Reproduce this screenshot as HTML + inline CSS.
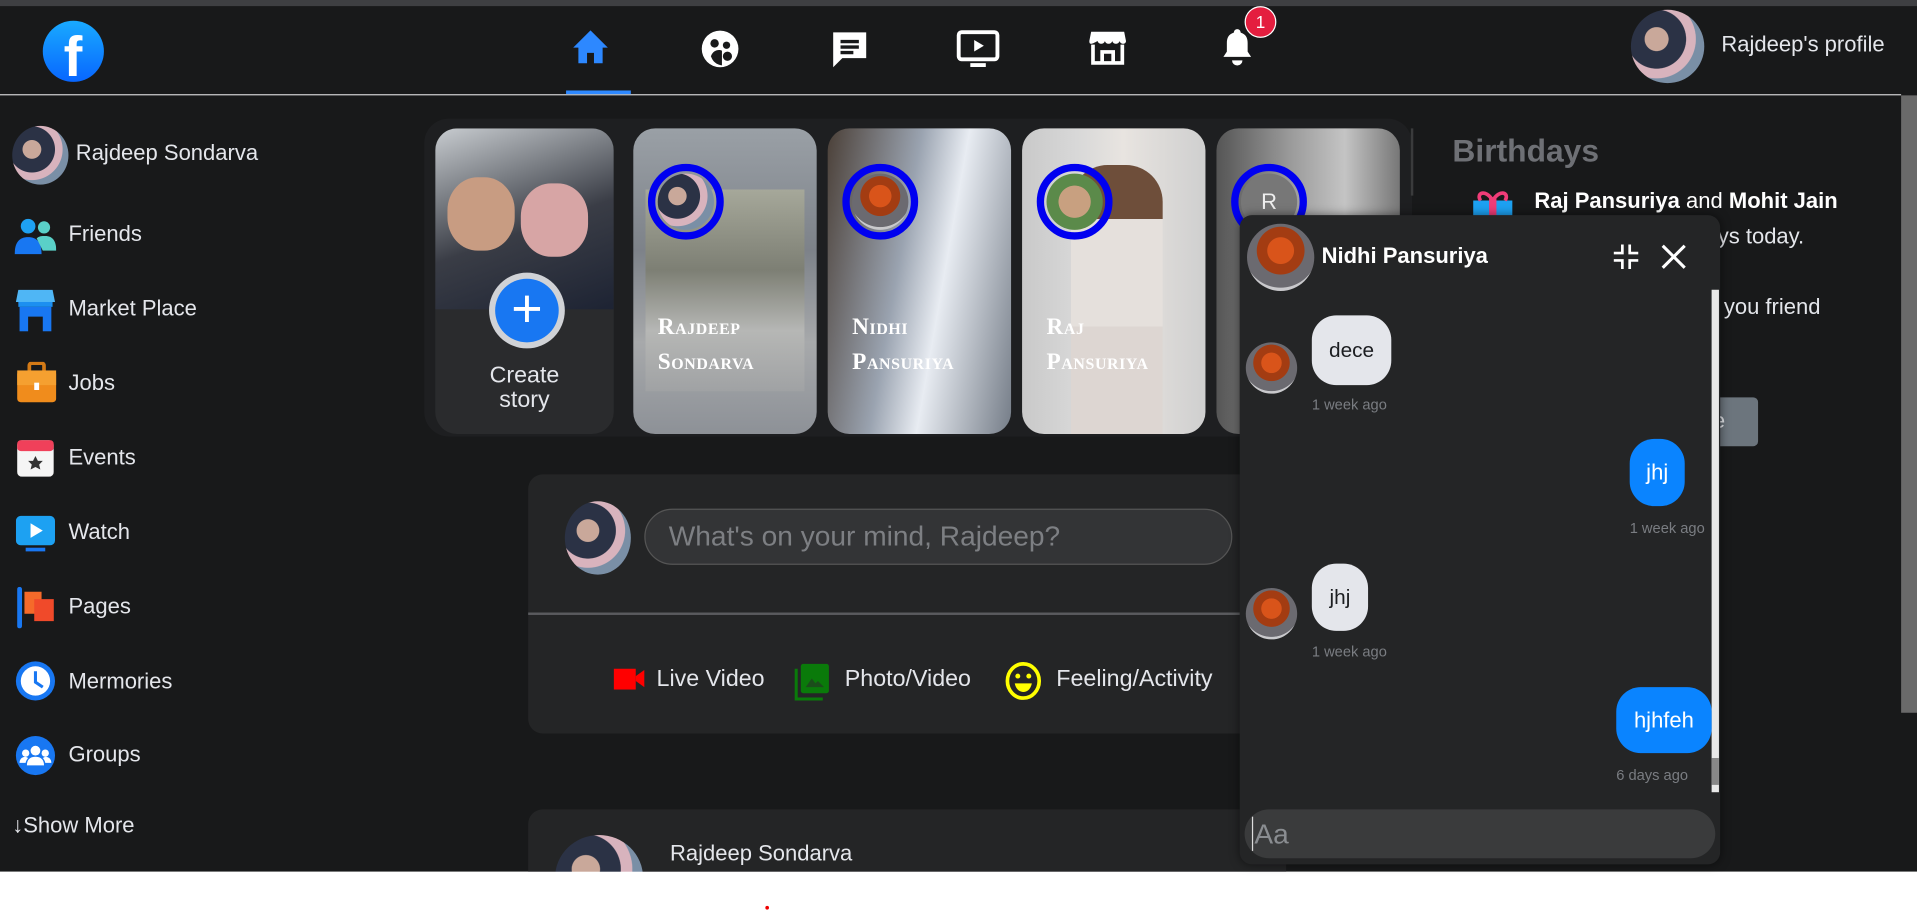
<!DOCTYPE html>
<html><head><meta charset="utf-8"><style>
html,body{margin:0;padding:0;width:1917px;height:912px;overflow:hidden;background:#fff;font-family:"Liberation Sans",sans-serif}
#w{position:absolute;left:0;top:0;width:1568px;height:746px;transform:scale(1.22258);transform-origin:0 0;background:#fff;overflow:hidden}
.a{position:absolute}
.t{position:absolute;color:#e4e6eb;white-space:nowrap}
.av{position:absolute;border-radius:50%;background:radial-gradient(circle at 35% 40%,#c9a89a 0 18%,#2b3245 19% 45%,#d8b3bd 46% 60%,#7a8fa6 61%);}
.tree{position:absolute;border-radius:50%;background:radial-gradient(circle at 50% 40%,#d9541a 0 25%,#a33c12 26% 45%,#6b6a70 46% 70%,#c9c9cc 71%);}
.story{position:absolute;top:105px;width:150px;height:250px;border-radius:18px;overflow:hidden}
.ring{position:absolute;top:134px;width:50px;height:50px;border:6px solid #0000f0;border-radius:50%}
.sn{position:absolute;left:20px;color:#fff;font-weight:bold;font-variant:small-caps;font-size:19px;font-family:"Liberation Serif",serif;letter-spacing:.5px}
.s{font-size:18px}
</style></head><body><div id="w">
<div class="a" style="left:0;top:0;width:1568px;height:713px;background:#18191a"></div>
<div class="a" style="left:0;top:0;width:1568px;height:5px;background:#3e3f42"></div>
<div class="a" style="left:0;top:77px;width:1555px;height:1px;background:#d0d0d0"></div>
<div class="a" style="left:1555px;top:78px;width:13px;height:505px;background:#6a6a6a"></div>
<div class="a" style="left:35px;top:17px;width:50px;height:50px;border-radius:50%;background:linear-gradient(#19aaff,#0866ff);overflow:hidden"><div class="a" style="left:17px;top:2px;color:#fff;font-weight:bold;font-size:46px;font-family:'Liberation Sans'">f</div></div>
<svg class="a" style="left:466px;top:22px" width="34" height="34" viewBox="0 0 24 24"><path fill="#2d88ff" d="M12 2 2 12h3v9h5v-6h4v6h5v-9h3z"/></svg>
<div class="a" style="left:463px;top:74px;width:53px;height:3px;background:#2d88ff"></div>
<svg class="a" style="left:571px;top:22px" width="36" height="36" viewBox="0 0 24 24"><circle cx="12" cy="12" r="10" fill="#fff"/><circle cx="9" cy="9" r="2.3" fill="#18191a"/><circle cx="15.5" cy="10" r="2" fill="#18191a"/><path d="M7 16c1-3 4-4 6-3v8c-3-.5-5-2-6-5z" fill="#18191a"/><circle cx="16" cy="16" r="2.5" fill="#18191a"/></svg>
<svg class="a" style="left:677px;top:22px" width="36" height="36" viewBox="0 0 24 24"><path fill="#fff" d="M3 3h18v14H8l-5 5z"/><path stroke="#18191a" stroke-width="1.8" d="M7 8h10M7 11h10M7 14h7"/></svg>
<svg class="a" style="left:781px;top:20px" width="38" height="38" viewBox="0 0 24 24"><rect x="2" y="4" width="20" height="14" rx="1.5" fill="none" stroke="#fff" stroke-width="2"/><path d="M10 8v6l5-3z" fill="#fff"/><path d="M8 21h8" stroke="#fff" stroke-width="2"/></svg>
<svg class="a" style="left:888px;top:20px" width="36" height="36" viewBox="0 0 24 24"><path d="M3 4h18l1 5c0 2-3 2-3.5 0-.5 2-3.5 2-4 0-.5 2-3.5 2-4 0-.5 2-3.5 2-4 0C3 11 2 11 2 9z" fill="#fff"/><path d="M4 11v10h16V11M9 21v-6h6v6" fill="none" stroke="#fff" stroke-width="2"/></svg>
<svg class="a" style="left:995px;top:20px" width="34" height="36" viewBox="0 0 24 24"><path fill="#fff" d="M12 2a2 2 0 0 1 2 2c3 1 4 3 4 6v5l2 3H4l2-3v-5c0-3 1-5 4-6a2 2 0 0 1 2-2zM9 20h6a3 3 0 0 1-6 0z"/></svg>
<div class="a" style="left:1018px;top:5px;width:26px;height:26px;border-radius:50%;background:#e41e3f;border:1px solid #fff;box-sizing:border-box;color:#fff;font-size:14px;text-align:center;line-height:24px">1</div>
<div class="av" style="left:1334px;top:8px;width:60px;height:60px"></div>
<div class="t" style="left:1408px;top:26px;font-size:18px">Rajdeep's profile</div>
<div class="av" style="left:10px;top:103px;width:46px;height:48px"></div>
<div class="t s" style="left:62px;top:115px">Rajdeep Sondarva</div>
<svg class="a" style="left:12px;top:178px" width="34" height="30" viewBox="0 0 34 30"><circle cx="11" cy="7" r="6" fill="#1ea1f2"/><circle cx="24" cy="8" r="5" fill="#5ad0c8"/><path d="M0 30c0-10 4-14 11-14s11 4 11 14z" fill="#1877f2"/><path d="M18 17c2-2 4-2 7-2 6 0 9 4 9 12h-11z" fill="#5ad0c8"/></svg>
<div class="t s" style="left:56px;top:181px">Friends</div>
<svg class="a" style="left:13px;top:237px" width="32" height="34" viewBox="0 0 32 34"><path d="M2 0h28l2 10H0z" fill="#4fb6f5"/><rect x="2" y="10" width="28" height="4" fill="#1c8ff0"/><path d="M3 14h26v20h-7V22h-12v12H3z" fill="#1877f2"/></svg>
<div class="t s" style="left:56px;top:242px">Market Place</div>
<svg class="a" style="left:14px;top:296px" width="32" height="34" viewBox="0 0 32 34"><rect x="10" y="1" width="12" height="8" rx="2" fill="none" stroke="#d47a16" stroke-width="3"/><rect x="0" y="7" width="32" height="26" rx="3" fill="#f08c1c"/><rect x="0" y="7" width="32" height="12" fill="#f5a030"/><rect x="14" y="17" width="4" height="6" fill="#fff"/></svg>
<div class="t s" style="left:56px;top:303px">Jobs</div>
<svg class="a" style="left:14px;top:360px" width="30" height="30" viewBox="0 0 30 30"><rect width="30" height="30" rx="4" fill="#f5f5f5"/><rect width="30" height="9" rx="3" fill="#f0405a"/><path d="M15 13l2 4h4l-3 3 1 4-4-2-4 2 1-4-3-3h4z" fill="#333"/></svg>
<div class="t s" style="left:56px;top:364px">Events</div>
<svg class="a" style="left:13px;top:420px" width="32" height="32" viewBox="0 0 32 32"><rect x="0" y="2" width="32" height="24" rx="4" fill="#1da1f2"/><path d="M12 8v12l10-6z" fill="#fff"/><rect x="8" y="28" width="16" height="3" fill="#1877f2"/></svg>
<div class="t s" style="left:56px;top:425px">Watch</div>
<svg class="a" style="left:14px;top:480px" width="32" height="34" viewBox="0 0 32 34"><rect x="0" y="0" width="4" height="34" rx="2" fill="#1877f2"/><path d="M6 4h14v18H6z" fill="#f56a2a"/><path d="M14 10h16v18H14z" fill="#f04a2a"/></svg>
<div class="t s" style="left:56px;top:486px">Pages</div>
<svg class="a" style="left:12px;top:540px" width="34" height="34" viewBox="0 0 34 34"><circle cx="17" cy="17" r="16" fill="#1877f2"/><circle cx="17" cy="17" r="12" fill="#fff"/><path d="M17 9v9l6 4" stroke="#1877f2" stroke-width="2.5" fill="none"/></svg>
<div class="t s" style="left:56px;top:547px">Mermories</div>
<svg class="a" style="left:12px;top:601px" width="34" height="34" viewBox="0 0 34 34"><circle cx="17" cy="17" r="16" fill="#1877f2"/><circle cx="17" cy="13" r="4" fill="#fff"/><circle cx="9" cy="15" r="3" fill="#fff"/><circle cx="25" cy="15" r="3" fill="#fff"/><path d="M10 25c0-5 3-7 7-7s7 2 7 7zM4 23c0-3 2-5 5-5l2 1c-1 1-2 3-2 4zM30 23c0-3-2-5-5-5l-2 1c1 1 2 3 2 4z" fill="#fff"/></svg>
<div class="t s" style="left:56px;top:607px">Groups</div>
<div class="t s" style="left:10px;top:665px">↓Show More</div>
<div class="a" style="left:347px;top:97px;width:808px;height:260px;border-radius:20px;background:#1e1f21"></div>
<div class="a" style="left:1154px;top:105px;width:2px;height:55px;background:#3a3b3c"></div>
<div class="a" style="left:356px;top:105px;width:146px;height:250px;border-radius:18px;background:#2a2b2d;overflow:hidden">
 <div class="a" style="left:0;top:0;width:146px;height:148px;background:linear-gradient(160deg,#c8ccd0 0%,#7a7e84 30%,#3a3d46 55%,#1d2333 100%)"></div>
 <div class="a" style="left:10px;top:40px;width:55px;height:60px;border-radius:45%;background:#c89c82"></div>
 <div class="a" style="left:70px;top:45px;width:55px;height:60px;border-radius:45%;background:#d7a5a5"></div>
</div>
<div class="a" style="left:400px;top:223px;width:62px;height:62px;border-radius:50%;background:#d0d2d6"></div>
<div class="a" style="left:405px;top:228px;width:52px;height:52px;border-radius:50%;background:#1877f2;color:#fff;font-size:44px;line-height:50px;text-align:center;font-weight:300">+</div>
<div class="t" style="left:356px;top:298px;width:146px;text-align:center;font-size:19px;line-height:20px;white-space:normal">Create<br>story</div>
<div class="story" style="left:518px;background:linear-gradient(#9aa0a6,#7d8289 40%,#a7a9ab 70%,#8d9197)"><div class="a" style="left:10px;top:50px;width:130px;height:165px;background:linear-gradient(#a6a89a,#7d7f74 40%,#b6b7b5 70%,#a0a2a4)"></div><div class="sn" style="top:152px">Rajdeep</div><div class="sn" style="top:181px">Sondarva</div></div>
<div class="ring" style="left:530px"><div class="av" style="left:2px;top:2px;width:46px;height:46px"></div></div>
<div class="story" style="left:677px;background:linear-gradient(100deg,#4b4038,#9aa3b0 40%,#e8ecf2 60%,#757d88)"><div class="sn" style="top:152px">Nidhi</div><div class="sn" style="top:181px">Pansuriya</div></div>
<div class="ring" style="left:689px"><div class="tree" style="left:2px;top:2px;width:46px;height:46px"></div></div>
<div class="story" style="left:836px;background:linear-gradient(90deg,#c9c9c9,#d8d8d8 30%,#e8e4e0 55%,#cfcfcf)"><div class="a" style="left:40px;top:30px;width:75px;height:220px;background:linear-gradient(#6e4e3a 0 20%,#e5e0dc 20% 60%,#ddd6d2 60%);border-radius:30px 30px 0 0"></div><div class="sn" style="top:152px">Raj</div><div class="sn" style="top:181px">Pansuriya</div></div>
<div class="ring" style="left:848px"><div class="av" style="left:2px;top:2px;width:46px;height:46px;background:radial-gradient(#c8a080 0 40%,#5b8a4a 41%)"></div></div>
<div class="story" style="left:995px;width:150px;background:linear-gradient(90deg,#555,#9a9a9a 40%,#c4c4c4 70%,#777)"></div>
<div class="ring" style="left:1007px"><div class="a" style="left:2px;top:2px;width:46px;height:46px;border-radius:50%;background:#777;color:#eee;font-size:18px;text-align:center;line-height:46px">R</div></div>
<div class="a" style="left:432px;top:388px;width:620px;height:212px;border-radius:12px;background:#242526"></div>
<div class="av" style="left:462px;top:410px;width:54px;height:60px"></div>
<div class="a" style="left:527px;top:416px;width:481px;height:46px;border-radius:24px;background:#333436;border:1px solid #555;box-sizing:border-box"></div>
<div class="t" style="left:547px;top:425px;font-size:23px;color:#7d7f83">What's on your mind, Rajdeep?</div>
<div class="a" style="left:432px;top:501px;width:620px;height:2px;background:#5a5b5e"></div>
<svg class="a" style="left:502px;top:543px" width="26" height="24" viewBox="0 0 26 24"><rect x="0" y="4" width="18" height="17" fill="#f00"/><path d="M18 10l7-5v14l-7-5z" fill="#f00"/></svg>
<div class="t" style="left:537px;top:545px;font-size:19px">Live Video</div>
<svg class="a" style="left:650px;top:541px" width="30" height="32" viewBox="0 0 30 32"><path d="M1 6v25h22" fill="none" stroke="#0a7a0a" stroke-width="3"/><rect x="5" y="2" width="23" height="24" rx="2" fill="#0a7a0a"/><path d="M9 21l5-7 3 4 2-2 5 5z" fill="#1b4d1b"/></svg>
<div class="t" style="left:691px;top:545px;font-size:19px">Photo/Video</div>
<svg class="a" style="left:822px;top:541px" width="30" height="32" viewBox="0 0 30 32"><ellipse cx="15" cy="16" rx="13" ry="14" fill="none" stroke="#ff0" stroke-width="3"/><circle cx="10.5" cy="12" r="2" fill="#ff0"/><circle cx="19.5" cy="12" r="2" fill="#ff0"/><path d="M8 18h14c-1 5-4 7-7 7s-6-2-7-7z" fill="#ff0"/></svg>
<div class="t" style="left:864px;top:545px;font-size:19px">Feeling/Activity</div>
<div class="a" style="left:432px;top:662px;width:620px;height:60px;border-radius:12px 12px 0 0;background:#242526"></div>
<div class="av" style="left:454px;top:683px;width:72px;height:70px"></div>
<div class="t" style="left:548px;top:688px;font-size:18px">Rajdeep Sondarva</div>
<div class="t" style="left:1188px;top:108px;font-size:26px;font-weight:bold;color:#6e7075">Birthdays</div>
<svg class="a" style="left:1203px;top:154px" width="36" height="24" viewBox="0 0 36 24"><rect x="2" y="10" width="32" height="14" fill="#1da1f2"/><path d="M18 10c-6-10-14-6-10 0M18 10c6-10 14-6 10 0" fill="none" stroke="#f03c78" stroke-width="3"/><rect x="15" y="8" width="6" height="16" fill="#f03c78"/></svg>
<div class="t" style="left:1255px;top:154px;font-size:18px;color:#fff"><b>Raj Pansuriya</b> and <b>Mohit Jain</b></div>
<div class="t" style="left:1405px;top:183px;font-size:18px">ys today.</div>
<div class="t" style="left:1410px;top:241px;font-size:18px">you friend</div>
<div class="a" style="left:1375px;top:325px;width:63px;height:40px;border-radius:4px;background:#6c757d"></div>
<div class="t" style="left:1386px;top:334px;font-size:18px">ete</div>
<div class="a" style="left:0;top:713px;width:1568px;height:33px;background:#fff"></div>
<div class="a" style="left:1014px;top:176px;width:393px;height:531px;border-radius:10px;background:#242526;box-shadow:0 0 8px rgba(0,0,0,.5)"></div>
<div class="tree" style="left:1020px;top:183px;width:55px;height:55px"></div>
<div class="t" style="left:1081px;top:199px;font-size:18px;font-weight:bold;color:#fff">Nidhi Pansuriya</div>
<svg class="a" style="left:1319px;top:199px" width="22" height="22" viewBox="0 0 22 22"><path d="M8 1v7H1M14 1v7h7M8 21v-7H1M14 21v-7h7" fill="none" stroke="#fff" stroke-width="2.2"/></svg>
<svg class="a" style="left:1358px;top:199px" width="22" height="22" viewBox="0 0 22 22"><path d="M2 2l18 18M20 2L2 20" stroke="#fff" stroke-width="2.5"/></svg>
<div class="a" style="left:1400px;top:237px;width:6px;height:411px;background:#e8e8e8"></div>
<div class="a" style="left:1400px;top:620px;width:6px;height:22px;background:#888"></div>
<div class="tree" style="left:1019px;top:280px;width:42px;height:42px"></div>
<div class="a" style="left:1073px;top:258px;width:65px;height:57px;border-radius:20px;background:#e4e6eb;color:#1c1e21;font-size:17px;line-height:57px;text-align:center">dece</div>
<div class="t" style="left:1073px;top:324px;font-size:12px;color:#7a7d82">1 week ago</div>
<div class="a" style="left:1333px;top:359px;width:45px;height:55px;border-radius:20px;background:#0a84ff;color:#fff;font-size:18px;line-height:55px;text-align:center">jhj</div>
<div class="t" style="left:1333px;top:425px;font-size:12px;color:#7a7d82">1 week ago</div>
<div class="tree" style="left:1019px;top:481px;width:42px;height:42px"></div>
<div class="a" style="left:1073px;top:461px;width:46px;height:55px;border-radius:20px;background:#e4e6eb;color:#1c1e21;font-size:17px;line-height:55px;text-align:center">jhj</div>
<div class="t" style="left:1073px;top:526px;font-size:12px;color:#7a7d82">1 week ago</div>
<div class="a" style="left:1322px;top:562px;width:78px;height:54px;border-radius:20px;background:#0a84ff;color:#fff;font-size:18px;line-height:54px;text-align:center">hjhfeh</div>
<div class="t" style="left:1322px;top:627px;font-size:12px;color:#7a7d82">6 days ago</div>
<div class="a" style="left:1018px;top:662px;width:385px;height:40px;border-radius:20px;background:#3a3b3c"></div>
<div class="a" style="left:1024px;top:668px;width:1px;height:28px;background:#ddd"></div>
<div class="t" style="left:1026px;top:669px;font-size:23px;color:#8a8d91">Aa</div>
<div class="a" style="left:626px;top:741px;width:3px;height:3px;border-radius:50%;background:#e00"></div>
</div></body></html>
